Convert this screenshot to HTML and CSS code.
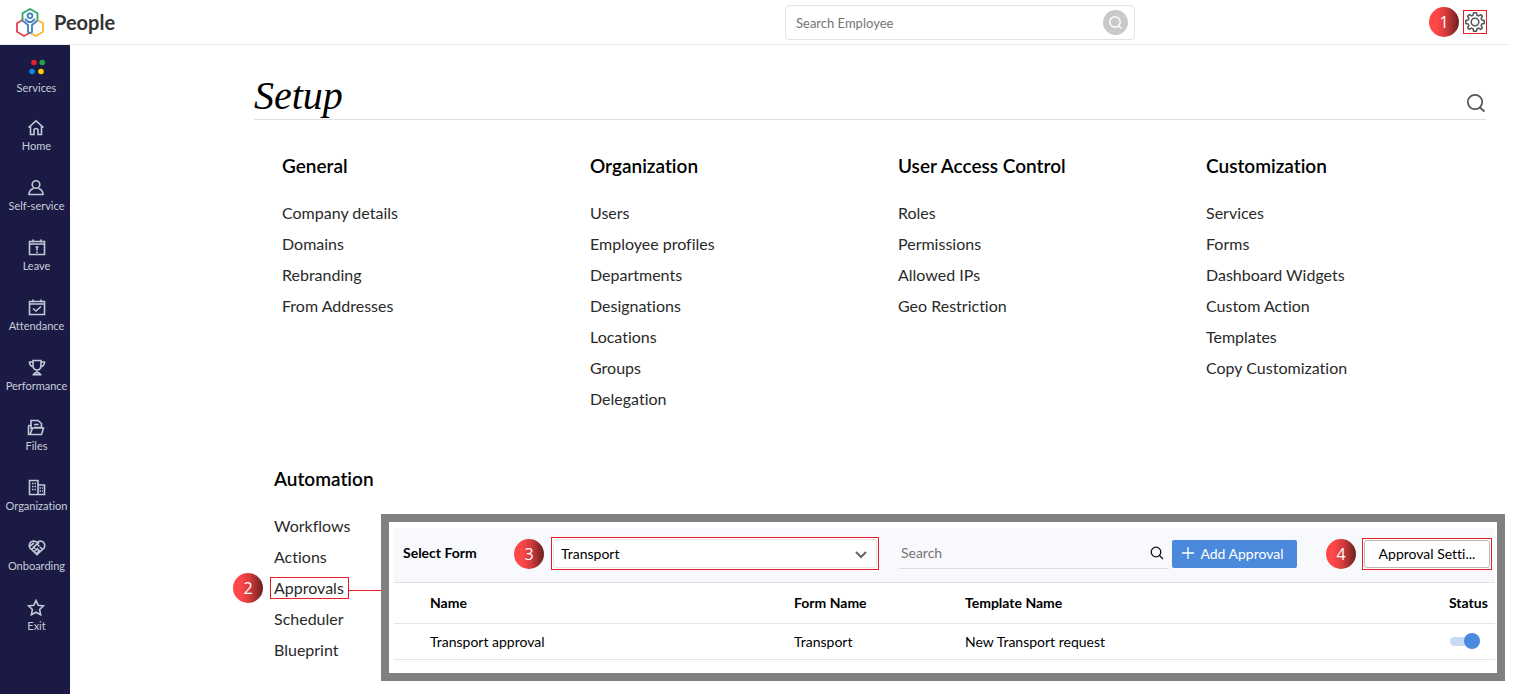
FILE: index.html
```
<!DOCTYPE html>
<html lang="en">

<head>
    <meta charset="UTF-8">
    <meta name="viewport" content="width=device-width, initial-scale=1.0">
    <title>People - Setup</title>
    <link rel="stylesheet" href="styles.css">
</head>

<body>
    <header class="topbar">
        <a href="#" class="brand">
            <svg width="32" height="32" viewBox="0 0 32 32" fill="none" stroke-width="1.8" stroke-linejoin="round">
                <path d="M8.500 14V7.300L16 3l7.500 4.300V14" stroke="#2fa866" />
                <path d="M8.500 14L3 17.300v8.400L10 30l6-3.300" stroke="#e5434d" />
                <path d="M23.500 14l5.500 3.300v8.400L22 30l-6-3.300" stroke="#f7b731" />
                <circle cx="16" cy="9.700" r="2.400" stroke="#3f7fc1" />
                <path d="M8.500 14.500l5.500 4.500v7l2 1 2-1v-7l5.500-4.500M11 13l3.500 3h3l3.500-3" stroke="#3f7fc1" />
            </svg>
            <span>People</span>
        </a>
        <form class="employee-search">
            <input type="text" placeholder="Search Employee" aria-label="Search Employee">
            <button type="button" aria-label="Search">
                <svg width="17" height="17" viewBox="0 0 17 17" fill="none" stroke="#fff" stroke-width="1.5">
                    <circle cx="8" cy="8" r="5.200" />
                    <path d="M11 11.500l3.500 3" />
                </svg>
            </button>
        </form>
        <div class="actions">
            <span class="badge">1</span>
            <button type="button" class="gear" aria-label="Settings">
                <svg width="22" height="22" viewBox="0 0 22 22" fill="none" stroke="#555" stroke-width="1.5" stroke-linejoin="round">
                    <path d="M9.600 1.800h2.800L13 4.200l1.600.7 2.100-1.300 1.700 1.700-1.300 2.100.7 1.600 2.400.6v2.800l-2.400.6-.7 1.600 1.300 2.100-1.700 1.700-2.100-1.300-1.600.7-.6 2.400H9.600L9 17.800l-1.600-.7-2.100 1.300-1.700-1.700 1.300-2.100-.7-1.600-2.400-.6V9.600L4.200 9l.7-1.600-1.300-2.100 1.700-1.700 2.100 1.300L9 4.200z" />
                    <circle cx="11" cy="11" r="3.800" />
                </svg>
            </button>
        </div>
    </header>

    <div class="layout">
        <nav class="sidebar">
            <a href="#" class="services">
                <svg width="18" height="23" viewBox="0 0 18 23">
                    <circle cx="7" cy="6.500" r="2.800" fill="#e0222f" />
                    <circle cx="15.200" cy="6.500" r="2.800" fill="#25a244" />
                    <circle cx="5" cy="15.500" r="2.800" fill="#0a8ae0" />
                    <circle cx="14" cy="15.500" r="2.800" fill="#ffcf00" />
                </svg>
                Services
            </a>
            <a href="#">
                <svg class="icon" viewBox="0 0 18 18">
                    <path d="M1.500 8.500L9 1.800l7.500 6.700M3.500 7v8.500h3.500v-4a2 2 0 0 1 4 0v4h3.500V7" />
                </svg>
                Home
            </a>
            <a href="#">
                <svg class="icon" viewBox="0 0 18 18">
                    <circle cx="9" cy="5.500" r="3.800" />
                    <path d="M6.500 9.500C3.500 10.500 2 12.500 2 15.500h14c0-3-1.500-5-4.500-6" />
                </svg>
                Self-service
            </a>
            <a href="#">
                <svg class="icon" viewBox="0 0 18 18">
                    <path d="M1.500 2.500h15v13h-15zM1.500 5h15M5 .5v3M13 .5v3M9 7.500v4M9 12.500v1.500M7.500 8h3" />
                </svg>
                Leave
            </a>
            <a href="#">
                <svg class="icon" viewBox="0 0 18 18">
                    <path d="M1.500 2.500h15v13h-15zM1.500 5h15M5 .5v3M13 .5v3M5 9.500l3 2.500 5-4.500" />
                </svg>
                Attendance
            </a>
            <a href="#">
                <svg class="icon" viewBox="0 0 18 18">
                    <path d="M5 1.500h8V6c0 3-1.500 5-4 5S5 9 5 6zM5 3H1.500c0 3 1.500 4.500 4 5M13 3h3.500c0 3-1.500 4.500-4 5M9 11v3M6 15.500c0-1.500 1-2 3-2s3 .5 3 2zM4.500 15.700h9" />
                </svg>
                Performance
            </a>
            <a href="#">
                <svg class="icon" viewBox="0 0 18 18">
                    <path d="M4 10V1.500h7l3.500 3V9M7 5.500h4.500M1.500 6.500v9h13l2-6.500H5.500L3 15.500M1.500 6.500H4M7 8.500h7" />
                </svg>
                Files
            </a>
            <a href="#">
                <svg class="icon" viewBox="0 0 18 18">
                    <path d="M1.500 1.500H10v14H1.500zM10 6h6.500v9.500H10M4 4.500h1.500M6.500 4.500H8M4 7.500h1.500M6.500 7.500H8M4 10.500h1.500M6.500 10.500H8M11.500 9H13M14 9h1M11.500 12H13M14 12h1" />
                </svg>
                Organization
            </a>
            <a href="#">
                <svg class="icon" viewBox="0 0 18 18">
                    <path d="M9 15.700L2 9C.5 6.500 1.500 3 4.500 2.300 6.500 1.800 8 2.500 9 3.500c1-1 2.500-1.700 4.500-1.200C16.500 3 17.500 6.500 16 9zM2 7l4-3M3.500 10.500L9 5l2.500 2.500M9 5l2-1.500M6 13l4-4M8 15l4-4M12 8l2.500 2.500M9.500 10l2.500 3M5 7.500L7.500 10" />
                </svg>
                Onboarding
            </a>
            <a href="#">
                <svg class="icon" viewBox="0 0 18 18">
                    <path d="M9 1.500l2.200 4.700 5.300.7-3.900 3.600 1 5.200L9 13.200l-4.600 2.500 1-5.200L1.500 6.900l5.300-.7z" />
                </svg>
                Exit
            </a>
        </nav>

        <main>
            <div class="title">
                <h1>Setup</h1>
                <button type="button" aria-label="Search setup">
                    <svg width="20" height="20" viewBox="0 0 20 20" fill="none" stroke="#555" stroke-width="1.7">
                        <circle cx="9" cy="9" r="7.200" />
                        <path d="M14 14.500l4.500 4" />
                    </svg>
                </button>
            </div>

            <div class="columns">
                <section>
                    <h2>General</h2>
                    <ul>
                        <li><a href="#">Company details</a></li>
                        <li><a href="#">Domains</a></li>
                        <li><a href="#">Rebranding</a></li>
                        <li><a href="#">From Addresses</a></li>
                    </ul>
                </section>
                <section>
                    <h2>Organization</h2>
                    <ul>
                        <li><a href="#">Users</a></li>
                        <li><a href="#">Employee profiles</a></li>
                        <li><a href="#">Departments</a></li>
                        <li><a href="#">Designations</a></li>
                        <li><a href="#">Locations</a></li>
                        <li><a href="#">Groups</a></li>
                        <li><a href="#">Delegation</a></li>
                    </ul>
                </section>
                <section>
                    <h2>User Access Control</h2>
                    <ul>
                        <li><a href="#">Roles</a></li>
                        <li><a href="#">Permissions</a></li>
                        <li><a href="#">Allowed IPs</a></li>
                        <li><a href="#">Geo Restriction</a></li>
                    </ul>
                </section>
                <section>
                    <h2>Customization</h2>
                    <ul>
                        <li><a href="#">Services</a></li>
                        <li><a href="#">Forms</a></li>
                        <li><a href="#">Dashboard Widgets</a></li>
                        <li><a href="#">Custom Action</a></li>
                        <li><a href="#">Templates</a></li>
                        <li><a href="#">Copy Customization</a></li>
                    </ul>
                </section>
            </div>

            <div class="automation">
                <section>
                    <h2>Automation</h2>
                    <ul>
                        <li><a href="#">Workflows</a></li>
                        <li><a href="#">Actions</a></li>
                        <li class="current"><span class="badge">2</span><a href="#">Approvals</a></li>
                        <li><a href="#">Scheduler</a></li>
                        <li><a href="#">Blueprint</a></li>
                    </ul>
                </section>

                <div class="panel">
                    <div class="toolbar">
                        <label for="form">Select Form</label>
                        <span class="badge">3</span>
                        <div class="marked select">
                            <select id="form">
                                <option>Transport</option>
                            </select>
                            <svg width="14" height="10" viewBox="0 0 14 10" fill="none" stroke="#666" stroke-width="2">
                                <path d="M2 2l5 5 5-5" />
                            </svg>
                        </div>
                        <div class="search">
                            <input type="text" placeholder="Search" aria-label="Search approvals">
                            <svg width="14" height="14" viewBox="0 0 14 14" fill="none" stroke="#111" stroke-width="1.3">
                                <circle cx="6" cy="6" r="4.800" />
                                <path d="M9.500 9.500l3.500 3.500" />
                            </svg>
                        </div>
                        <button type="button" class="add">
                            <svg width="12" height="14" viewBox="0 0 12 14" stroke="#fff" stroke-width="1.3">
                                <path d="M6 0v12M0 6h12" />
                            </svg>
                            Add Approval
                        </button>
                        <span class="badge">4</span>
                        <div class="marked">
                            <button type="button" class="settings">Approval Setti...</button>
                        </div>
                    </div>
                    <table>
                        <thead>
                            <tr>
                                <th class="name">Name</th>
                                <th class="form-name">Form Name</th>
                                <th>Template Name</th>
                                <th class="status">Status</th>
                            </tr>
                        </thead>
                        <tbody>
                            <tr>
                                <td class="name">Transport approval</td>
                                <td>Transport</td>
                                <td>New Transport request</td>
                                <td class="status"><input type="checkbox" class="toggle" aria-label="Status" checked></td>
                            </tr>
                        </tbody>
                    </table>
                </div>
            </div>
        </main>
    </div>
</body>

</html>
```
FILE: styles.css
```
* {
    box-sizing: border-box;
}

body {
    margin: 0;
    padding-right: 8px;
    font-family: Lato, "Liberation Sans", sans-serif;
    font-size: 14px;
    font-variant-ligatures: none;
    color: #000;
    background-color: #fff;
}

a {
    color: inherit;
    text-decoration: none;
}

button,
input,
select {
    font: inherit;
    color: inherit;
}

button {
    display: flex;
    align-items: center;
    justify-content: center;
    padding: 0;
    border: 0;
    background: none;
    cursor: pointer;
}

ul {
    margin: 0;
    padding: 0;
    list-style: none;
}

.badge {
    display: flex;
    flex: none;
    align-items: center;
    justify-content: center;
    width: 30px;
    height: 30px;
    border-radius: 50%;
    background: linear-gradient(90deg, #ff4747 25%, #d63c3c 55%, #6b2020);
    color: #fff;
    font-family: "Open Sans", sans-serif;
    font-size: 16px;
}

/* red frame round the controls to click */
.marked {
    border: 1px solid #ed1c24;
    padding: 1px;
    background-color: #fff;
}

/* top bar */
.topbar {
    display: flex;
    align-items: center;
    height: 45px;
    padding: 0 21px 0 14px;
    border-bottom: 1px solid #eaeaea;
}

.brand {
    display: flex;
    align-items: center;
    gap: 8px;
    font-size: 20px;
    font-weight: bold;
    color: #333;
}

.employee-search {
    display: flex;
    align-items: center;
    width: 350px;
    height: 35px;
    margin-left: auto;
    padding: 0 6px 0 10px;
    border: 1px solid #e2e2e2;
    border-radius: 4px;
}

.employee-search input {
    flex: 1;
    padding: 2px 0 0;
    border: 0;
    outline: 0;
    font-size: 13px;
}

.employee-search button {
    width: 25px;
    height: 25px;
    border-radius: 50%;
    background-color: #c9c9c9;
}

::placeholder {
    color: #757575;
    opacity: 1;
}

.actions {
    display: flex;
    align-items: center;
    gap: 4px;
    margin-left: 294px;
}

.gear {
    width: 24px;
    height: 24px;
    border: 1px solid #ed1c24;
}

/* side navigation */
.layout {
    display: flex;
    min-height: calc(100vh - 45px);
}

.sidebar {
    display: flex;
    flex: none;
    flex-direction: column;
    align-items: center;
    width: 70px;
    padding: 11px 0 0 3px;
    background-color: #1b1a45;
    color: #c8cdd8;
    font-size: 11px;
    line-height: 14px;
}

.sidebar a {
    display: flex;
    flex-direction: column;
    align-items: center;
    gap: 2px;
    margin-bottom: 26px;
}

.sidebar .services {
    margin-bottom: 24px;
}

.icon {
    width: 18px;
    height: 18px;
    fill: none;
    stroke: #c0cad6;
    stroke-width: 1.6;
}

/* setup page */
main {
    flex: 1;
    min-width: 0;
    padding-left: 184px;
}

.title {
    display: flex;
    align-items: center;
    justify-content: space-between;
    height: 75px;
    margin-right: 22px;
    padding-top: 26px;
    border-bottom: 1px solid #e0e0e0;
}

h1 {
    margin: 0;
    font-family: Georgia, "Liberation Serif", serif;
    font-size: 40px;
    font-style: italic;
    font-weight: normal;
}

.title button {
    margin-top: 16px;
}

.columns {
    display: grid;
    grid-template-columns: repeat(4, 1fr);
    margin-right: 22px;
    padding-top: 34px;
}

.columns section {
    padding-left: 28px;
}

h2 {
    margin: 0 0 19px;
    font-size: 19px;
    line-height: 24px;
    font-weight: 600;
}

li {
    font-size: 16px;
    line-height: 31px;
    color: #2a2a2a;
}

.automation {
    display: flex;
    margin-top: 53px;
    padding-right: 3px;
}

.automation section {
    flex: none;
    width: 127px;
    padding-left: 20px;
}

.current {
    position: relative;
}

.current .badge {
    position: absolute;
    top: 1px;
    left: -41px;
}

.current a {
    display: inline-block;
    margin-left: -4px;
    padding: 0 4px 0 3px;
    border: 1px solid #ed1c24;
    line-height: 20px;
}

/* line from the Approvals link to the panel */
.current::after {
    content: "";
    position: absolute;
    top: 18px;
    left: 75px;
    right: 0;
    border-top: 1px solid #ed1c24;
}

/* approvals panel */
.panel {
    flex: 1;
    align-self: flex-start;
    margin-top: 47px;
    padding: 6px 2px 13px 5px;
    border: 8px solid #808080;
    background-color: #fff;
}

.toolbar {
    display: flex;
    align-items: center;
    height: 55px;
    padding: 0 3px 3px 9px;
    border-bottom: 1px solid #e0e2e5;
    background-color: #f8f9fc;
}

.toolbar label {
    width: 111px;
    padding-bottom: 2px;
    font-weight: bold;
}

.select {
    position: relative;
    flex: 330;
    margin-left: 7px;
}

.select select {
    display: block;
    width: 100%;
    height: 29px;
    padding: 0 7px;
    border: 1px solid #e4e6ea;
    border-radius: 3px;
    background-color: #fff;
    appearance: none;
}

.select svg {
    position: absolute;
    top: 12px;
    right: 10px;
    pointer-events: none;
}

.search {
    display: flex;
    flex: 268;
    align-items: center;
    height: 31px;
    margin-left: 20px;
    padding: 0 5px 0 2px;
    border-bottom: 1px solid #dcdee2;
}

.search input {
    flex: 1;
    min-width: 0;
    padding: 0 0 2px;
    border: 0;
    outline: 0;
    background: none;
}

.add {
    gap: 6px;
    width: 125px;
    height: 28px;
    margin: 0 29px 0 3px;
    padding-right: 3px;
    border-radius: 2px;
    background-color: #4a89dc;
    color: #fff;
}

.add + .badge {
    margin-right: 6px;
}

.settings {
    width: 126px;
    height: 28px;
    border: 1px solid #bbb;
    border-radius: 3px;
    background-color: #fff;
}

table {
    width: 100%;
    border-collapse: collapse;
    table-layout: fixed;
}

th,
td {
    height: 40px;
    padding: 0;
    border-bottom: 1px solid #e5e5e5;
    text-align: left;
}

td {
    height: 36px;
}

.name {
    width: 400px;
    padding-left: 36px;
}

.form-name {
    width: 171px;
}

.status {
    width: 46px;
}

.toggle {
    position: relative;
    display: block;
    width: 30px;
    height: 9px;
    margin: 0 0 0 1px;
    border-radius: 5px;
    background-color: #c8d9f4;
    appearance: none;
}

.toggle::before {
    content: "";
    position: absolute;
    top: -4px;
    right: 0;
    width: 16px;
    height: 16px;
    border-radius: 50%;
    background-color: #4a89dc;
}
```
